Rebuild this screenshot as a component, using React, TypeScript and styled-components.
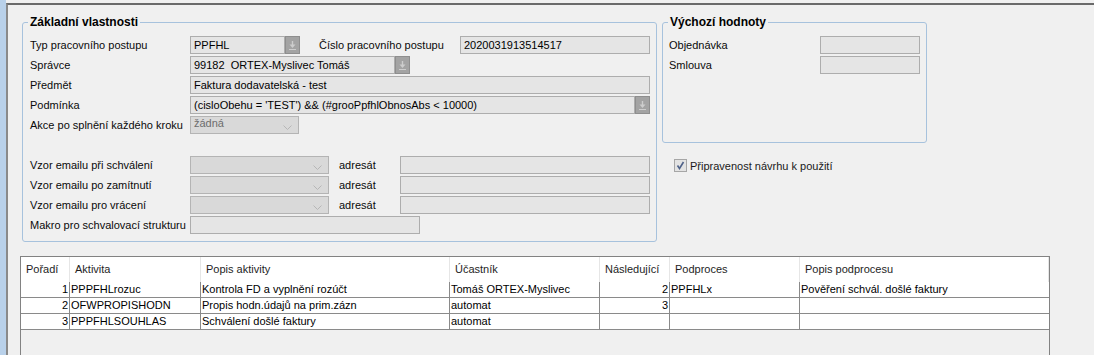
import React from 'react';
import styled, { createGlobalStyle } from 'styled-components';

const GlobalStyle = createGlobalStyle`
	html, body {
		margin: 0;
		padding: 0;
		background: #f0f0f0;
	}
	body {
		font-family: "Liberation Sans", Arial, sans-serif;
		font-size: 11px;
		color: #000;
	}
`;

const Window = styled.div`
	display: flex;
	width: 1094px;
	height: 355px;
	overflow: hidden;
	background: #f0f0f0;
`;

const SideStrip = styled.div`
	flex: none;
	width: 6px;
	background: #b9d1ea;
`;

const Main = styled.div`
	flex: 1;
	min-width: 0;
	display: flex;
	flex-direction: column;
	margin-top: 3px;
	border-top: 2px solid #6a6a6a;
	border-left: 2px solid #8a8a8a;
`;

const TopArea = styled.div`
	display: flex;
	align-items: flex-start;
	gap: 5px;
	padding: 17px 0 0 14px;
`;

const Group = styled.div<{ $width: number; $height: number; $padLeft: number }>`
	position: relative;
	box-sizing: border-box;
	width: ${(p) => p.$width}px;
	height: ${(p) => p.$height}px;
	border: 1px solid #a7c2dd;
	border-radius: 3px;
	padding: 13px 0 0 ${(p) => p.$padLeft}px;
	display: flex;
	flex-direction: column;
	gap: 2px;
`;

const GroupTitle = styled.div`
	position: absolute;
	top: -8px;
	left: 5px;
	padding: 0 2px;
	background: #f0f0f0;
	font-weight: bold;
	font-size: 12px;
	line-height: 14px;
	color: #000;
`;

const FormRow = styled.div<{ $gapBefore?: number }>`
	display: flex;
	align-items: center;
	height: 18px;
	margin-top: ${(p) => p.$gapBefore ?? 0}px;
`;

const Label = styled.div<{ $width: number; $indent?: number }>`
	flex: none;
	width: ${(p) => p.$width}px;
	margin-left: ${(p) => p.$indent ?? 0}px;
	white-space: nowrap;
	line-height: 18px;
	color: #0a0a0a;
`;

const Field = styled.div<{ $width: number }>`
	flex: none;
	box-sizing: border-box;
	width: ${(p) => p.$width}px;
	height: 18px;
	padding: 0 3px;
	border: 1px solid #adadad;
	background: #e5e5e5;
	line-height: 16px;
	white-space: nowrap;
	overflow: hidden;
`;

const LookupButton = styled.div`
	flex: none;
	box-sizing: border-box;
	width: 15px;
	height: 18px;
	border: 1px solid #8e8e8e;
	background: #a3a3a3;
	display: flex;
	align-items: center;
	justify-content: center;
`;

const Combo = styled.div<{ $width: number }>`
	flex: none;
	box-sizing: border-box;
	width: ${(p) => p.$width}px;
	height: 18px;
	padding: 0 6px 0 3px;
	border: 1px solid #b4b4b4;
	background: #d9d9d9;
	color: #6d6d6d;
	display: flex;
	justify-content: space-between;
	line-height: 13px;
	white-space: nowrap;
`;

const ChevronBox = styled.div`
	align-self: flex-end;
	margin-bottom: 3px;
	display: flex;
`;

const RightColumn = styled.div`
	display: flex;
	flex-direction: column;
`;

const CheckRow = styled.div`
	display: flex;
	align-items: center;
	gap: 3px;
	margin: 16px 0 0 12px;
	color: #1a1a1a;
`;

const CheckBox = styled.div`
	box-sizing: border-box;
	width: 13px;
	height: 13px;
	border: 1px solid #a6a6a6;
	background: #e3e3e3;
	display: flex;
	align-items: center;
	justify-content: center;
`;

const Grid = styled.div`
	flex: 1;
	box-sizing: border-box;
	width: 1030px;
	margin: 14px 0 0 12px;
	border: 1px solid #828282;
	border-bottom: none;
	background: #f0f0f0;
`;

const columns = '49px 131px 249px 150px 70px 130px 249px';

const HeaderRow = styled.div`
	display: grid;
	grid-template-columns: ${columns};
	height: 25px;
	background: #fff;
`;

const HeaderCell = styled.div`
	box-sizing: border-box;
	padding-left: 5px;
	border-right: 1px solid #e6e6e6;
	line-height: 25px;
	color: #1e1e1e;
	white-space: nowrap;
`;

const DataRow = styled.div`
	display: grid;
	grid-template-columns: ${columns};
	height: 16px;
`;

const DataCell = styled.div<{ $right?: boolean; $last?: boolean }>`
	box-sizing: border-box;
	padding: 0 1px;
	background: #fff;
	border-bottom: 1px solid #8a8a8a;
	border-right: ${(p) => (p.$last ? 'none' : '1px solid #8a8a8a')};
	text-align: ${(p) => (p.$right ? 'right' : 'left')};
	line-height: 15px;
	white-space: nowrap;
	overflow: hidden;
`;

const LookupIcon = () => (
	<svg width="9" height="11" viewBox="0 0 9 11">
		<line x1="4.5" y1="1" x2="4.5" y2="5" stroke="#cdcdcd" strokeWidth="1.4" />
		<polygon points="1.5,4.5 7.5,4.5 4.5,8" fill="#cdcdcd" />
		<line x1="1" y1="9.5" x2="8" y2="9.5" stroke="#cdcdcd" strokeWidth="1" />
	</svg>
);

const ChevronIcon = () => (
	<svg width="9" height="5" viewBox="0 0 9 5">
		<polyline points="0.5,0.5 4.5,4.5 8.5,0.5" fill="none" stroke="#b6b6b6" strokeWidth="1" />
	</svg>
);

const CheckIcon = () => (
	<svg width="11" height="11" viewBox="0 0 11 11">
		<path d="M2.5 5.5 L4.5 8.5 L8.5 2" fill="none" stroke="#4f6289" strokeWidth="1.6" />
	</svg>
);

const DisabledCombo = ({ width, value }: { width: number; value?: string }) => (
	<Combo $width={width}>
		<span>{value ?? ''}</span>
		<ChevronBox>
			<ChevronIcon />
		</ChevronBox>
	</Combo>
);

const emailRows = ['Vzor emailu při schválení', 'Vzor emailu po zamítnutí', 'Vzor emailu pro vrácení'];

const headers = ['Pořadí', 'Aktivita', 'Popis aktivity', 'Účastník', 'Následující', 'Podproces', 'Popis podprocesu'];

const steps = [
	['1', 'PPPFHLrozuc', 'Kontrola FD a vyplnění rozúčt', 'Tomáš ORTEX-Myslivec', '2', 'PPFHLx', 'Pověření schvál. došlé faktury'],
	['2', 'OFWPROPISHODN', 'Propis hodn.údajů na prim.zázn', 'automat', '3', '', ''],
	['3', 'PPPFHLSOUHLAS', 'Schválení došlé faktury', 'automat', '', '', ''],
];

const numericCols = [0, 4];

export default function App() {
	return (
		<>
			<GlobalStyle />
			<Window>
				<SideStrip />
				<Main>
					<TopArea>
						<Group $width={635} $height={220} $padLeft={7}>
							<GroupTitle>Základní vlastnosti</GroupTitle>
							<FormRow>
								<Label $width={160}>Typ pracovního postupu</Label>
								<Field $width={95}>PPFHL</Field>
								<LookupButton>
									<LookupIcon />
								</LookupButton>
								<Label $width={141} $indent={19}>
									Číslo pracovního postupu
								</Label>
								<Field $width={190}>2020031913514517</Field>
							</FormRow>
							<FormRow>
								<Label $width={160}>Správce</Label>
								<Field $width={205}>99182&nbsp; ORTEX-Myslivec Tomáš</Field>
								<LookupButton>
									<LookupIcon />
								</LookupButton>
							</FormRow>
							<FormRow>
								<Label $width={160}>Předmět</Label>
								<Field $width={460}>Faktura dodavatelská - test</Field>
							</FormRow>
							<FormRow>
								<Label $width={160}>Podmínka</Label>
								<Field $width={445}>(cisloObehu = 'TEST') &amp;&amp; (#grooPpfhlObnosAbs &lt; 10000)</Field>
								<LookupButton>
									<LookupIcon />
								</LookupButton>
							</FormRow>
							<FormRow>
								<Label $width={160}>Akce po splnění každého kroku</Label>
								<DisabledCombo width={109} value="žádná" />
							</FormRow>
							{emailRows.map((label, i) => (
								<FormRow key={label} $gapBefore={i === 0 ? 20 : 0}>
									<Label $width={160}>{label}</Label>
									<DisabledCombo width={139} />
									<Label $width={61} $indent={10}>
										adresát
									</Label>
									<Field $width={250} />
								</FormRow>
							))}
							<FormRow>
								<Label $width={160}>Makro pro schvalovací strukturu</Label>
								<Field $width={230} />
							</FormRow>
						</Group>
						<RightColumn>
							<Group $width={265} $height={121} $padLeft={6}>
								<GroupTitle>Výchozí hodnoty</GroupTitle>
								<FormRow>
									<Label $width={151}>Objednávka</Label>
									<Field $width={100} />
								</FormRow>
								<FormRow>
									<Label $width={151}>Smlouva</Label>
									<Field $width={100} />
								</FormRow>
							</Group>
							<CheckRow>
								<CheckBox>
									<CheckIcon />
								</CheckBox>
								<span>Připravenost návrhu k použití</span>
							</CheckRow>
						</RightColumn>
					</TopArea>
					<Grid>
						<HeaderRow>
							{headers.map((h) => (
								<HeaderCell key={h}>{h}</HeaderCell>
							))}
						</HeaderRow>
						{steps.map((row) => (
							<DataRow key={row[0]}>
								{row.map((value, i) => (
									<DataCell key={i} $right={numericCols.includes(i)} $last={i === row.length - 1}>
										{value}
									</DataCell>
								))}
							</DataRow>
						))}
					</Grid>
				</Main>
			</Window>
		</>
	);
}
